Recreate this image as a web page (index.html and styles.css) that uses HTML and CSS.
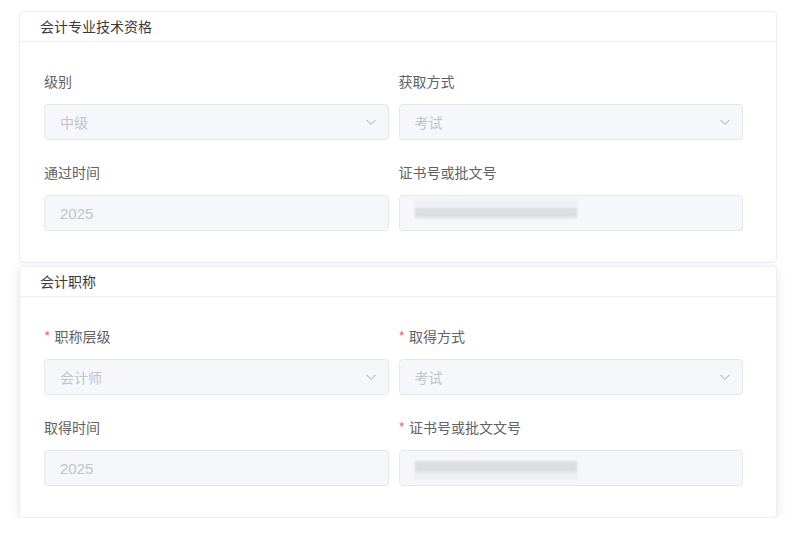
FILE: index.html
```html
<!DOCTYPE html>
<html lang="zh-CN">
<head>
<meta charset="utf-8">
<title>会计资格</title>
<link rel="stylesheet" href="styles.css">
</head>
<body>
<div class="page">
  <section class="card">
    <div class="card-header">会计专业技术资格</div>
    <div class="card-body">
      <div class="item">
        <div class="label">级别</div>
        <div class="input select"><span class="val">中级</span><svg class="chev" viewBox="0 0 12 12"><path d="M1.5 4 L6 8.2 L10.5 4" fill="none" stroke="#c0c4cc" stroke-width="1.1"/></svg></div>
      </div>
      <div class="item">
        <div class="label">获取方式</div>
        <div class="input select"><span class="val">考试</span><svg class="chev" viewBox="0 0 12 12"><path d="M1.5 4 L6 8.2 L10.5 4" fill="none" stroke="#c0c4cc" stroke-width="1.1"/></svg></div>
      </div>
      <div class="item">
        <div class="label">通过时间</div>
        <div class="input"><span class="val num">2025</span></div>
      </div>
      <div class="item">
        <div class="label">证书号或批文号</div>
        <div class="input"><span class="redact redact-a"></span></div>
      </div>
    </div>
  </section>

  <section class="card card-hover">
    <div class="card-header">会计职称</div>
    <div class="card-body">
      <div class="item">
        <div class="label"><span class="req">*</span>职称层级</div>
        <div class="input select"><span class="val">会计师</span><svg class="chev" viewBox="0 0 12 12"><path d="M1.5 4 L6 8.2 L10.5 4" fill="none" stroke="#c0c4cc" stroke-width="1.1"/></svg></div>
      </div>
      <div class="item">
        <div class="label"><span class="req">*</span>取得方式</div>
        <div class="input select"><span class="val">考试</span><svg class="chev" viewBox="0 0 12 12"><path d="M1.5 4 L6 8.2 L10.5 4" fill="none" stroke="#c0c4cc" stroke-width="1.1"/></svg></div>
      </div>
      <div class="item">
        <div class="label">取得时间</div>
        <div class="input"><span class="val num">2025</span></div>
      </div>
      <div class="item">
        <div class="label"><span class="req">*</span>证书号或批文文号</div>
        <div class="input"><span class="redact redact-b"></span></div>
      </div>
    </div>
  </section>
</div>
</body>
</html>
```

FILE: styles.css
```css
* { box-sizing: border-box; }
html, body {
  margin: 0;
  padding: 0;
  background: #ffffff;
}
body {
  font-family: "Noto Sans CJK SC", "Noto Sans", sans-serif;
  font-size: 14px;
  color: #606266;
}
.page {
  padding: 11px 19px 0 19px;
}
.card {
  background: #fff;
  border: 1px solid #ebeef5;
  border-radius: 4px;
}
.card + .card {
  margin-top: 3px;
}
.card-hover {
  box-shadow: 0 2px 12px 0 rgba(0, 0, 0, 0.1);
}
.card-header {
  height: 30px;
  line-height: 29px;
  padding: 0 20px;
  border-bottom: 1px solid #ebeef5;
  color: #3a3a3a;
  font-size: 14px;
}
.card-body {
  padding: 28px 33px 10px 24px;
  display: grid;
  grid-template-columns: 1fr 1fr;
  column-gap: 10px;
}
.item {
  margin-bottom: 21px;
}
.label {
  height: 22px;
  line-height: 22px;
  margin-bottom: 12px;
  color: #606266;
  font-size: 14px;
}
.req {
  color: #f56c6c;
  margin-right: 4px;
}
.input {
  height: 36px;
  background: #f5f7fa;
  border: 1px solid #e4e7ed;
  border-radius: 4px;
  padding: 0 11px 0 15px;
  display: flex;
  align-items: center;
  color: #c0c4cc;
}
.val {
  flex: 1;
  font-size: 14px;
}
.num {
  font-family: "Liberation Sans", "Noto Sans", sans-serif;
  font-size: 15px;
}
.chev {
  width: 12px;
  height: 12px;
}
.redact {
  display: block;
  width: 162px;
  height: 19px;
  filter: blur(1.2px);
  align-self: flex-start;
}
.redact-a {
  margin-top: 3px;
  background: linear-gradient(#eff0f3 0, #eff0f3 45%, #dddee2 50%, #dcdde1 100%);
}
.redact-b {
  margin-top: 10px;
  background: linear-gradient(#dcdde1 0, #dcdde1 55%, #eceef1 62%, #eef0f3 100%);
}
```
